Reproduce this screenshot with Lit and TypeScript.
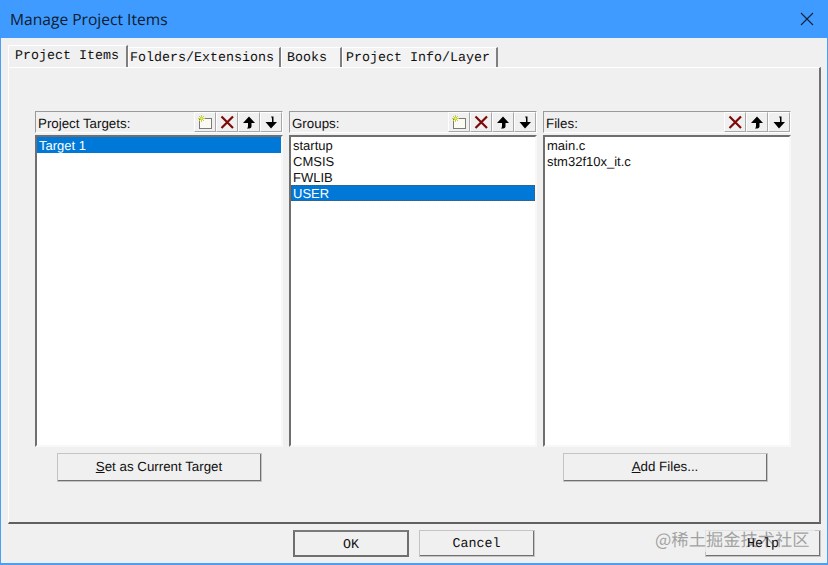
import { LitElement, html, css, svg } from "lit";
import { customElement } from "lit/decorators.js";

const newIcon = svg`<svg class="ic" viewBox="0 0 16 16" width="16" height="16"><rect x="2.5" y="4.5" width="12" height="10" fill="#fbfbf4" stroke="#000" stroke-width="1" stroke-dasharray="1 1"/><path d="M4.5 1v7M1 4.5h7M2 2l5 5M7 2l-5 5" stroke="#c5cf3a" stroke-width="1"/><circle cx="4.5" cy="4.5" r="1" fill="#eef26a"/></svg>`;
const delIcon = svg`<svg class="ic" viewBox="0 0 16 16" width="16" height="16"><path d="M2.5 2.5L14 14M14 2.5L2.5 14" stroke="#7d0a0a" stroke-width="2.2" fill="none"/></svg>`;
const upIcon = svg`<svg class="ic" viewBox="0 0 16 16" width="16" height="16"><path d="M8 2.5L14 9H10.5V12.5Q10.5 14 8.5 14.5H6Q7 13.5 7 12V9H2Z" fill="#000"/></svg>`;
const downIcon = svg`<svg class="ic" viewBox="0 0 16 16" width="16" height="16"><path d="M10.5 2.5H8Q9 3.5 9 5V8H2.5L8 14.5L14 8H10.5Z" fill="#000"/></svg>`;

@customElement("app-root")
export class AppRoot extends LitElement {
  static styles = css`
    :host { display: block; width: 828px; height: 565px; overflow: hidden; }
    .win { position: relative; box-sizing: border-box; width: 828px; height: 565px; background: #f0f0f0; display: flex; flex-direction: column; border: 1px solid #4a9ff5; border-top: none; border-bottom-width: 2px; text-rendering: geometricPrecision; }
    .title { height: 38px; flex: none; margin: 0 -1px; padding: 0 10px; background: #3f9bff; display: flex; align-items: center; justify-content: space-between; font: 15.6px "Open Sans", "Noto Sans", sans-serif; color: #0e1c2e; }
    .close { display: block; margin-right: 4px; }
    .tabs { display: flex; height: 22px; margin: 7px 0 0 7px; align-items: flex-end; flex: none; }
    .tab { box-sizing: border-box; height: 20px; background: #f3f3f3; border-top: 1px solid #fff; border-left: 1px solid #fff; border-right: 2px solid #7f7f7f; font: 13.33px/21px "Liberation Mono", monospace; color: #111; white-space: pre; }
    .tab.active { height: 22px; padding: 0 7px 0 6px; line-height: 21px; background: #f0f0f0; }
    .tab.t2 { padding: 0 5px 0 1px; }
    .tab.t3 { padding: 0 13px 0 5px; }
    .tab.t4 { padding: 0 6px 0 3px; }
    .panel { box-sizing: border-box; width: 813px; height: 457px; margin: 0 0 0 7px; flex: none; border-top: 1px solid #fff; border-left: 1px solid #fff; border-right: 2px solid #707070; border-bottom: 2px solid #606060; padding: 43px 27px 0 26px; background: #f0f0f0; display: flex; gap: 6px; }
    .col { width: 248px; flex: none; display: flex; flex-direction: column; }
    .head { box-sizing: border-box; height: 22px; display: flex; align-items: center; border-top: 1px solid #9a9a9a; border-left: 1px solid #9a9a9a; border-bottom: 1px solid #fff; border-right: 1px solid #fff; padding-left: 2px; font: 13.33px "Liberation Sans", sans-serif; color: #111; }
    .head span { flex: 1; padding-top: 2px; }
    .tb { box-sizing: border-box; width: 22px; height: 20px; flex: none; display: flex; align-items: center; justify-content: center; border-right: 1px solid #a8a8a8; border-bottom: 1px solid #a8a8a8; border-top: 1px solid #fff; border-left: 1px solid #fff; }
    .ic { display: block; }
    .list { box-sizing: border-box; height: 312px; margin-top: 2px; background: #fff; border-top: 2px solid #6f6f6f; border-left: 2px solid #6f6f6f; border-right: 2px solid #f8f8f8; border-bottom: 2px solid #f8f8f8; font: 13px/15px "Liberation Sans", sans-serif; color: #111; }
    .row { box-sizing: border-box; height: 16px; padding: 1px 0 0 2px; }
    .row.sel { background: #0078d7; color: #fff; }
    .row.focus { outline: 1px dotted #555; outline-offset: -1px; }
    .btn { box-sizing: border-box; flex: none; display: flex; align-items: center; justify-content: center; background: #f0f0f0; border-top: 1px solid #fff; border-left: 1px solid #fff; border-right: 2px solid #707070; border-bottom: 2px solid #707070; color: #111; outline: 1px solid #c4c4c4; outline-offset: -1px; }
    .col .btn { width: 205px; height: 29px; margin: 6px 0 0 22px; padding-bottom: 2px; font: 13.33px "Liberation Sans", sans-serif; }
    .col .btn.b3 { margin-left: 20px; }
    .foot { flex: 1; display: flex; padding: 6px 0 0 292px; gap: 10px; align-items: flex-start; }
    .foot .btn { width: 116px; height: 27px; padding-top: 3px; font: 13.33px "Liberation Mono", monospace; }
    .foot .ok { border: 2px solid #6f6f6f; border-top-color: #7a7a7a; outline: none; }
    .foot .help { margin-left: 160px; }
    .wm { position: absolute; left: 654px; top: 526px; padding: 2px 0; width: 160px; font: 17.3px/22px "Noto Sans CJK SC", sans-serif; color: rgba(130,130,130,.72); white-space: nowrap; background: rgba(240,240,240,.7); }
    .helptext { position: absolute; left: 746px; top: 537px; font: 13.33px/15px "Liberation Mono", monospace; color: #111; }
  `;

  private column(label: string, rows: string[], sel: number, tools: unknown[], button?: unknown, cls = "") {
    return html`<div class="col">
      <div class="head"><span>${label}</span>${tools.map((t) => html`<div class="tb">${t}</div>`)}</div>
      <div class="list">${rows.map((r, i) => html`<div class="row ${i === sel ? "sel" : ""} ${i === sel && rows.length > 1 ? "focus" : ""}">${r}</div>`)}</div>
      ${button ? html`<div class="btn ${cls}">${button}</div>` : ""}
    </div>`;
  }

  render() {
    return html`<div class="win">
      <div class="title">
        <span>Manage Project Items</span>
        <svg class="close" width="14" height="14" viewBox="0 0 14 14"><path d="M1 1L13 13M13 1L1 13" stroke="#10233a" stroke-width="1.1"/></svg>
      </div>
      <div class="tabs">
        <div class="tab active">Project Items</div>
        <div class="tab t2">Folders/Extensions</div>
        <div class="tab t3">Books</div>
        <div class="tab t4">Project Info/Layer</div>
      </div>
      <div class="panel">
        ${this.column("Project Targets:", ["Target 1"], 0, [newIcon, delIcon, upIcon, downIcon], html`<span><u>S</u>et as Current Target</span>`)}
        ${this.column("Groups:", ["startup", "CMSIS", "FWLIB", "USER"], 3, [newIcon, delIcon, upIcon, downIcon])}
        ${this.column("Files:", ["main.c", "stm32f10x_it.c"], -1, [delIcon, upIcon, downIcon], html`<span><u>A</u>dd Files...</span>`, "b3")}
      </div>
      <div class="foot">
        <div class="btn ok">OK</div>
        <div class="btn">Cancel</div>
        <div class="btn help"></div>
      </div>
      <div class="wm">@稀土掘金技术社区</div>
      <div class="helptext">Help</div>
    </div>`;
  }
}
